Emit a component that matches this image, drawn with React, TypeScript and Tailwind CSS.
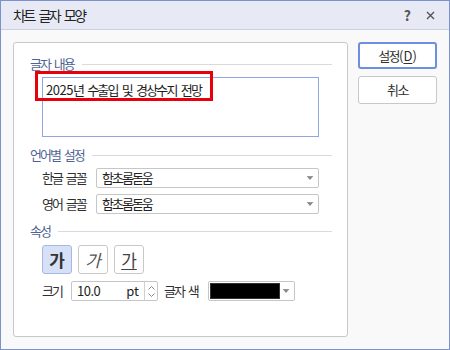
import React from 'react';

const fontKr = "font-['Noto_Sans_CJK_KR','Noto_Sans',sans-serif]";

function SectionHeader({ label }: { label: string }) {
  return (
    <div className="flex h-[16px] items-center gap-[8px] pl-[16px] pr-[15px]">
      <span className="text-[13px] leading-[16px] tracking-[-2px] [word-spacing:3px] text-[#4f6494]">{label}</span>
      <div className="h-px flex-1 bg-[#dadada]" />
    </div>
  );
}

function DropArrow() {
  return (
    <svg width="6" height="4" viewBox="0 0 6 4" className="shrink-0">
      <path d="M0 0.5h6" stroke="#999" strokeWidth="1" />
      <path d="M0.5 1h5l-2.5 3z" fill="#888" />
    </svg>
  );
}

function FontSelect({ label, value }: { label: string; value: string }) {
  return (
    <div className="flex items-center pl-[28px]">
      <span className="w-[54px] text-[13px] tracking-[-2px] [word-spacing:3px] text-[#2f2f2f]">{label}</span>
      <div className="flex h-[20px] w-[223px] items-center rounded-[2px] border border-[#c6c6c6] bg-white pl-[5px] pr-[5px]">
        <span className="flex-1 text-[13px] tracking-[-2px] text-[#222]">{value}</span>
        <DropArrow />
      </div>
    </div>
  );
}

function StyleButton({ active, children }: { active?: boolean; children: React.ReactNode }) {
  return (
    <button
      type="button"
      className={
        active
          ? 'flex h-[29px] w-[30px] items-center justify-center rounded-[3px] border border-[#a5b9e4] bg-[#d6e1f7]'
          : 'flex h-[29px] w-[30px] items-center justify-center rounded-[3px] border border-[#c9c9c9] bg-white'
      }
    >
      {children}
    </button>
  );
}

export default function App() {
  return (
    <div className={`flex h-[350px] w-[450px] flex-col border border-[#7b92cd] bg-[#f9f9f9] ${fontKr}`}>
      <div className="flex h-[29px] shrink-0 items-center border-b border-[#c9d0e6] bg-[#e7eaf5] pl-[12px] pr-[13px]">
        <span className="flex-1 text-[14px] tracking-[-2.5px] [word-spacing:4px] text-[#222]">차트 글자 모양</span>
        <span className="mr-[15px] text-[14px] font-bold text-[#555]">?</span>
        <svg width="9" height="9" viewBox="0 0 9 9" className="mr-[1px]">
          <path d="M1 1l7 7M8 1l-7 7" stroke="#555" strokeWidth="1.4" />
        </svg>
      </div>

      <div className="flex flex-1 gap-[10px] pl-[12px] pr-[12px] pt-[12px]">
        <div className="h-[295px] w-[335px] shrink-0 rounded-[3px] border border-[#c8c8c8] bg-white">
          <div className="mt-[13px]">
            <SectionHeader label="글자 내용" />
          </div>

          <div className="relative ml-[28px] mt-[5px] h-[60px] w-[277px] border border-[#8fa7e0] bg-white">
            <span className="absolute left-[3px] top-[3px] text-[13px] leading-[17px] tracking-[-1.8px] [word-spacing:3px] text-[#1e1e1e]">
              <span className="tracking-[-0.5px]">2025</span>년 수출입 및 경상수지 전망
            </span>
            <div className="absolute left-[-8px] top-[-7px] h-[30px] w-[178px] border-[3px] border-[#e8000b]" />
          </div>

          <div className="mt-[10px]">
            <SectionHeader label="언어별 설정" />
          </div>
          <div className="mt-[5px]">
            <FontSelect label="한글 글꼴" value="함초롬돋움" />
          </div>
          <div className="mt-[6px]">
            <FontSelect label="영어 글꼴" value="함초롬돋움" />
          </div>

          <div className="mt-[9px]">
            <SectionHeader label="속성" />
          </div>

          <div className="mt-[6px] flex gap-[6px] pl-[28px]">
            <StyleButton active>
              <span className="text-[17px] font-bold text-[#333]">가</span>
            </StyleButton>
            <StyleButton>
              <span className="text-[17px] italic text-[#555]">가</span>
            </StyleButton>
            <StyleButton>
              <span className="text-[17px] text-[#444] underline decoration-1 underline-offset-[2px]">가</span>
            </StyleButton>
          </div>

          <div className="mt-[7px] flex h-[20px] items-center pl-[28px]">
            <span className="w-[29px] text-[13px] tracking-[-2px] text-[#2f2f2f]">크기</span>
            <div className="flex h-[20px] w-[87px] items-stretch rounded-[2px] border border-[#c6c6c6] bg-white">
              <span className="flex-1 pl-[5px] text-[13px] leading-[18px] tracking-[-0.5px] text-[#222]">10.0</span>
              <span className="pr-[5px] text-[13px] leading-[18px] text-[#222]">pt</span>
              <div className="flex w-[13px] flex-col items-center justify-center gap-[3px] border-l border-[#d0d0d0]">
                <svg width="7" height="4" viewBox="0 0 7 4">
                  <path d="M0.5 3.5l3-3 3 3" fill="none" stroke="#888" strokeWidth="1" />
                </svg>
                <svg width="7" height="4" viewBox="0 0 7 4">
                  <path d="M0.5 0.5l3 3 3-3" fill="none" stroke="#888" strokeWidth="1" />
                </svg>
              </div>
            </div>
            <span className="ml-[6px] w-[44px] text-[13px] tracking-[-2px] [word-spacing:3px] text-[#2f2f2f]">글자 색</span>
            <div className="flex h-[20px] w-[87px] items-center rounded-[2px] border border-[#c6c6c6] bg-white pl-[1px] pr-[5px]">
              <div className="h-[16px] w-[70px] border border-[#333] bg-black" />
              <div className="flex flex-1 justify-end">
                <DropArrow />
              </div>
            </div>
          </div>
        </div>

        <div className="flex flex-col gap-[7px]">
          <button
            type="button"
            className="h-[27px] w-[79px] rounded-[3px] border-2 border-[#6c8fdf] bg-white text-[13px] text-[#2f2f2f]"
          >
            <span className="tracking-[-1.5px]">설정</span>
            <span>
              (<span className="underline underline-offset-[2px]">D</span>)
            </span>
          </button>
          <button
            type="button"
            className="h-[28px] w-[79px] rounded-[3px] border border-[#c8c8c8] bg-white text-[13px] tracking-[-1.5px] text-[#2f2f2f]"
          >
            취소
          </button>
        </div>
      </div>
    </div>
  );
}
